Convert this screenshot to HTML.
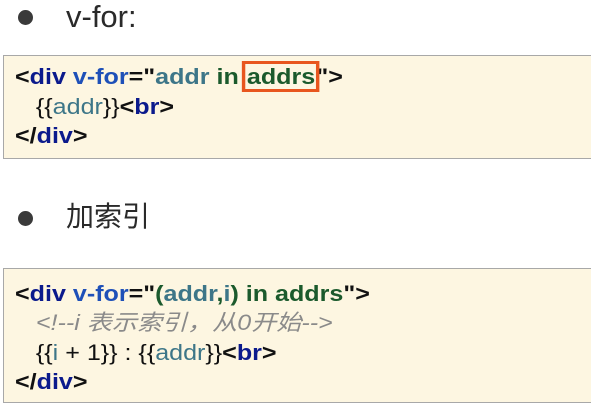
<!DOCTYPE html>
<html><head><meta charset="utf-8"><style>
body{margin:0;width:591px;height:407px;background:#fff;position:relative;overflow:hidden;font-family:"Liberation Sans","Noto Sans CJK SC",sans-serif}
.b{position:absolute;left:18px;width:15px;height:15px;border-radius:50%;background:#3a3a3a}
.h{position:absolute;left:66px;font-size:28px;color:#2a2a2a;line-height:1}
.box{position:absolute;left:3px;width:600px;background:#fdf6e1;border:1px solid #a8a8a8;box-sizing:border-box;font-size:22px;font-weight:bold;color:#111}
.l{position:absolute;left:11px;white-space:pre;line-height:1;transform:scaleX(1.14);transform-origin:0 0}
.t{color:#0b1a8c}.a{color:#1e50b8}.v{color:#3d7688;font-weight:normal}.g{color:#1b5a2c}
.n{font-weight:normal}.c{color:#8a8a8a;font-style:italic;font-weight:normal}
</style></head><body>
<div class="b" style="top:10px"></div><div class="h" style="top:1px;font-size:31px">v-for:</div>
<div class="box" style="top:55px;height:104px">
<div class="l" style="top:10px">&lt;<span class="t">div</span> <span class="a">v-for</span>="<span class="v" style="font-weight:bold">addr</span> <span class="g">in <span style="outline:3px solid #e8561e;outline-offset:0px;padding:0 1px">addrs</span></span>"&gt;</div>
<div class="l" style="top:40px"><span class="n">   {{</span><span class="v">addr</span><span class="n">}}</span>&lt;<span class="t">br</span>&gt;</div>
<div class="l" style="top:69px">&lt;/<span class="t">div</span>&gt;</div>
</div>
<div class="b" style="top:211px"></div><div class="h" style="top:203px">加索引</div>
<div class="box" style="top:268px;height:135px">
<div class="l" style="top:14px">&lt;<span class="t">div</span> <span class="a">v-for</span>="<span class="g">(<span class="v" style="font-weight:bold">addr</span>,<span class="v" style="font-weight:bold">i</span>) in addrs</span>"&gt;</div>
<div class="l c" style="top:43px">   &lt;!--i 表示索引，从0开始--&gt;</div>
<div class="l" style="top:73px"><span class="n">   {{</span><span class="v">i</span><span class="n"> + 1}} : {{</span><span class="v">addr</span><span class="n">}}</span>&lt;<span class="t">br</span>&gt;</div>
<div class="l" style="top:102px">&lt;/<span class="t">div</span>&gt;</div>
</div>
</body></html>
